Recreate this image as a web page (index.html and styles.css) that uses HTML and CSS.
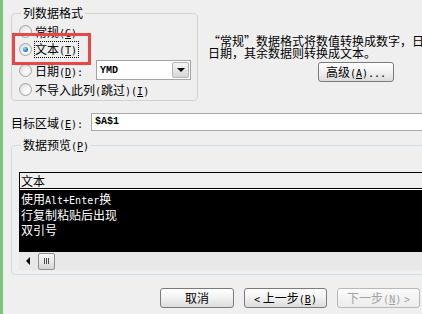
FILE: index.html
```html
<!DOCTYPE html>
<html>
    <head>
        <meta http-equiv="Content-Type" content="text/html; charset=UTF-8">
        <title>文本导入向导 - 第 3 步，共 3 步</title>
        <link rel="stylesheet" href="styles.css">
    </head>
    <body>
        <div class="page">
            <div class="top">
                <fieldset class="group format">
                    <legend>列数据格式</legend>
                    <div class="opt r1"><span class="radio"></span><span>常规<span class="key">(<u>G</u>)</span></span></div>
                    <div class="opt r2"><span class="radio checked"></span><span class="focus">文本<span class="key">(<u>T</u>)</span></span></div>
                    <div class="opt r3">
                        <span class="radio"></span>
                        <span class="date-label">日期<span class="key">(<u>D</u>):</span></span>
                        <div class="combo">
                            <span class="combo-val">YMD</span>
                            <span class="combo-btn"><span class="arrow-down"></span></span>
                        </div>
                    </div>
                    <div class="opt r4"><span class="radio"></span><span>不导入此列<span class="key">(</span>跳过<span class="key">)(<u>I</u>)</span></span></div>
                </fieldset>
                <div class="desc">
                    <p>“常规”数据格式将数值转换成数字，日期值会转换成<br>日期，其余数据则转换成文本。</p>
                    <button class="btn adv">高级<span class="key">(<u>A</u>)...</span></button>
                </div>
            </div>

            <div class="target">
                <span class="target-label">目标区域<span class="key">(<u>E</u>):</span></span>
                <div class="field">$A$1</div>
            </div>

            <fieldset class="group preview">
                <legend>数据预览<span class="key">(<u>P</u>)</span></legend>
                <div class="grid">
                    <div class="grid-head">文本</div>
                    <div class="grid-body">
                        <div class="row">使用<span class="key">Alt+Enter</span>换</div>
                        <div class="row">行复制粘贴后出现</div>
                        <div class="row">双引号</div>
                    </div>
                </div>
                <div class="hscroll">
                    <span class="arrow-left"></span>
                    <span class="thumb"><i></i><i></i><i></i></span>
                </div>
            </fieldset>

            <div class="actions">
                <button class="btn cancel">取消</button>
                <button class="btn step"><span class="key">&lt;</span> 上一步<span class="key">(<u>B</u>)</span></button>
                <button class="btn step" disabled>下一步<span class="key">(<u>N</u>)</span> <span class="key">&gt;</span></button>
            </div>

            <!-- red highlight drawn over the selected option -->
            <div class="callout"></div>
        </div>
    </body>
</html>
```

FILE: styles.css
```css
* {
    box-sizing: border-box;
}
html {
    overflow: hidden;
}
body {
    margin: 0;
    width: 422px;
    height: 314px;
    overflow: hidden;
    background-color: #efefef;
    border-left: 3px solid #7cc67c;
    font-family: "Noto Sans CJK SC", sans-serif;
    font-size: 12px;
    color: #000;
}
u {
    text-decoration: underline;
}
/* half-width latin like the old bitmap font: 6px per char */
.key {
    font-family: "DejaVu Sans Mono", monospace;
    font-size: 10px;
}
.page {
    position: relative;
    padding: 6px 0 0 8px;
}

/* group boxes */
.group {
    margin: 0;
    border: 1px solid #d3d3cb;
    border-radius: 4px;
}
.group legend {
    margin-left: 2px;
    padding: 0 2px;
    line-height: 14px;
    height: 14px;
}

.top {
    display: flex;
}
.format {
    flex: none;
    width: 187px;
    height: 95px;
    padding: 2px 0 0 7px;
}
.opt {
    display: flex;
    align-items: center;
    gap: 3px;
    white-space: nowrap;
}
.r1 { height: 18px; }
.r2 { height: 19px; }
.r3 { height: 22px; }
.r4 { height: 17px; }

.radio {
    flex: none;
    position: relative;
    width: 13px;
    height: 13px;
    border: 1px solid #a4a4a4;
    border-radius: 50%;
    background: radial-gradient(circle at 65% 65%, #ffffff 0%, #f2f2f2 40%, #d2d2d2 100%);
}
.radio.checked::after {
    content: "";
    position: absolute;
    left: 3px;
    top: 3px;
    width: 5px;
    height: 5px;
    border-radius: 50%;
    background: radial-gradient(circle at 35% 35%, #8fdcff 0%, #2a8fd0 50%, #0d4f8c 100%);
}
.focus {
    line-height: 13px;
    padding-right: 1px;
    outline: 1px dotted #000;
}
.date-label {
    width: 58px;
}
.combo {
    width: 95px;
    height: 20px;
    border: 1px solid #a3a3a3;
    background-color: #fff;
    display: flex;
    align-items: center;
}
.combo-val {
    flex: 1;
    padding-left: 3px;
    font-family: "Liberation Mono", monospace;
    font-weight: bold;
    font-size: 10px;
}
.combo-btn {
    width: 17px;
    height: 16px;
    margin-right: 1px;
    border: 1px solid #b4b4b4;
    border-radius: 2px;
    background: linear-gradient(#f6f6f6, #d6d6d6);
    display: flex;
    align-items: center;
    justify-content: center;
}
.arrow-down {
    width: 0;
    height: 0;
    border-left: 4px solid transparent;
    border-right: 4px solid transparent;
    border-top: 4px solid #000;
}

.desc {
    margin-left: 10px;
    padding-top: 29px;
    white-space: nowrap;
}
.desc p {
    margin: 0;
    line-height: 12px;
}

/* buttons */
.btn {
    height: 20px;
    padding: 0;
    border: 1px solid #7b7b7b;
    border-radius: 3px;
    background: linear-gradient(#ffffff 0%, #f3f3f3 45%, #dcdcdc 100%);
    font-family: "Noto Sans CJK SC", sans-serif;
    font-size: 12px;
    line-height: 18px;
    color: #000;
    white-space: nowrap;
}
.btn:disabled {
    color: #a2a2a2;
    border-color: #b8b8b8;
    background: linear-gradient(#fbfbfb, #ececec);
}
.adv {
    display: block;
    width: 76px;
    margin: 3px 0 0 110px;
}

.target {
    display: flex;
    align-items: center;
    height: 18px;
    margin-top: 12px;
    margin-right: -10px;
}
.target-label {
    width: 80px;
}
.field {
    flex: 1;
    height: 18px;
    border: 1px solid #a8a8a8;
    background-color: #fff;
    padding-left: 3px;
    font-family: "Liberation Mono", monospace;
    font-weight: bold;
    font-size: 10px;
    line-height: 16px;
}

.preview {
    width: 440px;
    height: 137px;
    margin-top: 7px;
    padding: 20px 0 4px 7px;
    border-color: #d2dce4;
}
.grid {
    border-left: 1px solid #000;
    border-top: 1px solid #000;
}
.grid-head {
    height: 16px;
    border-bottom: 1px solid #000;
    background-color: #f0f0f0;
    padding-left: 1px;
    line-height: 15px;
}
.grid-body {
    height: 63px;
    border-top: 1px solid #fff;
    background-color: #000;
    color: #fff;
    padding: 1px 0 0 1px;
}
.row {
    height: 15.5px;
    line-height: 15px;
}
.hscroll {
    height: 18px;
    background-color: #e8e8e8;
    display: flex;
    align-items: center;
}
.arrow-left {
    width: 0;
    height: 0;
    margin-left: 7px;
    border-top: 4px solid transparent;
    border-bottom: 4px solid transparent;
    border-right: 4px solid #000;
}
.thumb {
    width: 17px;
    height: 17px;
    margin-left: 8px;
    border: 1px solid #8e8e8e;
    border-radius: 2px;
    background: linear-gradient(#fafafa, #d4d4d4);
    display: flex;
    align-items: center;
    justify-content: center;
    gap: 1px;
}
.thumb i {
    width: 1px;
    height: 6px;
    background-color: #4a4a4a;
}

.actions {
    display: flex;
    justify-content: flex-end;
    gap: 10px;
    margin-top: 13px;
    padding-right: 2px;
}
.cancel {
    width: 74px;
}
.step {
    width: 83px;
}

.callout {
    position: absolute;
    left: 9px;
    top: 33px;
    width: 79px;
    height: 32px;
    border: 3px solid #ea4646;
}
```
